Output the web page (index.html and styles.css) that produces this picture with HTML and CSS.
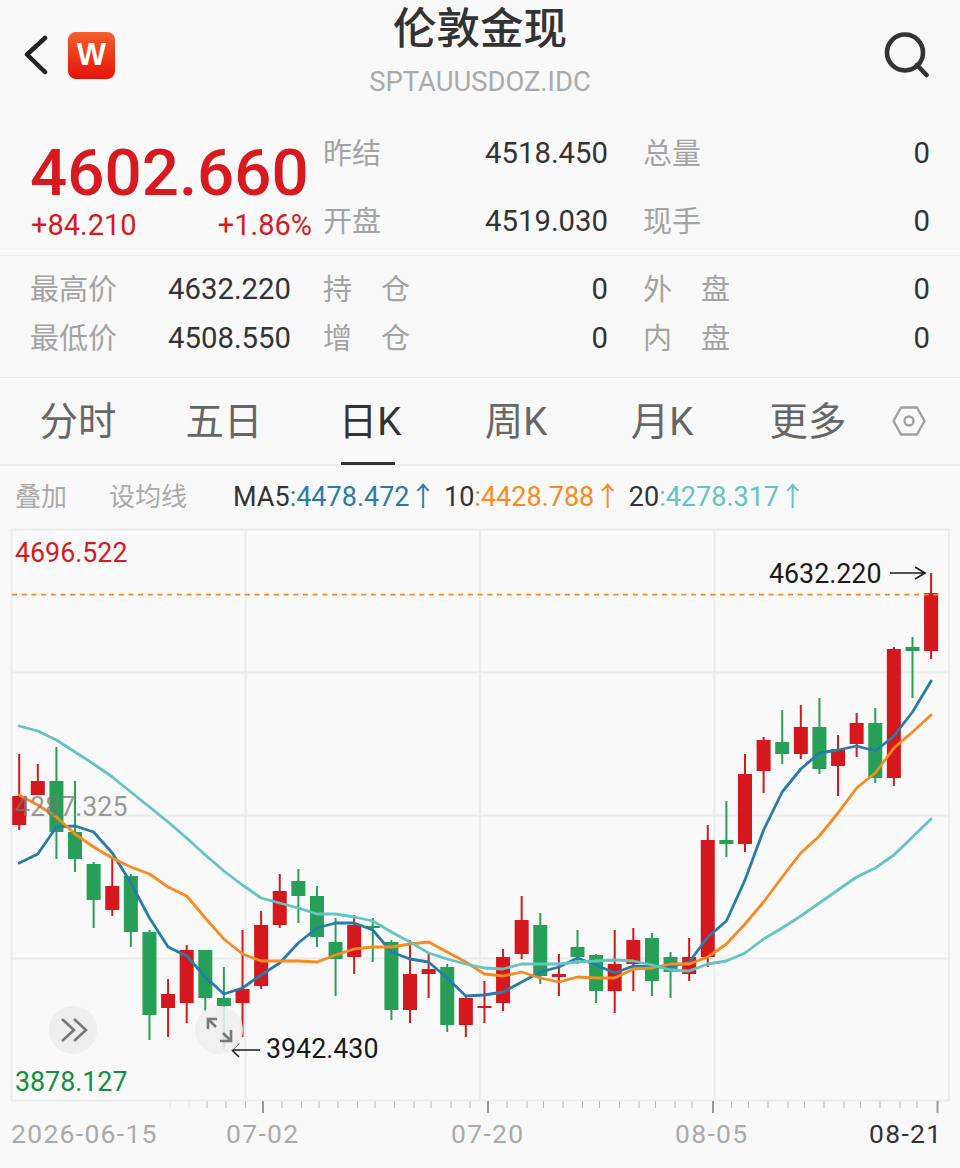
FILE: index.html
```html
<!DOCTYPE html>
<html lang="zh-CN">
<head>
    <meta charset="UTF-8">
    <meta name="viewport" content="width=device-width, initial-scale=1.0">
    <title>伦敦金现</title>
    <link rel="stylesheet" href="styles.css">
</head>
<body>
    <header class="topbar">
        <div class="topbar-left">
            <svg class="back-icon" width="24" height="40" viewBox="0 0 24 40">
                <path d="M21 3 L3 19.5 L21 37"/>
            </svg>
            <span class="logo">W</span>
        </div>
        <div class="title-box">
            <h1 class="title">伦敦金现</h1>
            <div class="code">SPTAUUSDOZ.IDC</div>
        </div>
        <svg class="search-icon" width="46" height="46" viewBox="0 0 46 46">
            <circle cx="21" cy="20.5" r="18"/>
            <path d="M33 33 L42.5 43"/>
        </svg>
    </header>

    <section class="quote">
        <div class="price-box">
            <div class="price">4602.660</div>
            <div class="change"><span>+84.210</span><span>+1.86%</span></div>
        </div>
        <div class="stat-grid stat-grid-top">
            <div class="stat"><span class="stat-label">昨结</span><span>4518.450</span></div>
            <div class="stat"><span class="stat-label">总量</span><span>0</span></div>
            <div class="stat"><span class="stat-label">开盘</span><span>4519.030</span></div>
            <div class="stat"><span class="stat-label">现手</span><span>0</span></div>
        </div>
    </section>

    <section class="extra">
        <div class="stat-grid-left">
            <div class="stat"><span class="stat-label">最高价</span><span>4632.220</span></div>
            <div class="stat"><span class="stat-label">最低价</span><span>4508.550</span></div>
        </div>
        <div class="stat-grid">
            <div class="stat"><span class="stat-label">持　仓</span><span>0</span></div>
            <div class="stat"><span class="stat-label">外　盘</span><span>0</span></div>
            <div class="stat"><span class="stat-label">增　仓</span><span>0</span></div>
            <div class="stat"><span class="stat-label">内　盘</span><span>0</span></div>
        </div>
    </section>

    <nav class="tabs">
        <div class="tab">分时</div>
        <div class="tab">五日</div>
        <div class="tab active">日K</div>
        <div class="tab">周K</div>
        <div class="tab">月K</div>
        <div class="tab">更多</div>
        <svg class="hex-icon" width="34" height="30" viewBox="0 0 34 30">
            <path d="M1.5 15 L9 1.5 H25 L32.5 15 L25 28.5 H9 Z"/>
            <circle cx="17" cy="15" r="4.5"/>
        </svg>
    </nav>

    <div class="ma-row">
        <span class="ma-action">叠加</span>
        <span class="ma-action">设均线</span>
        <span class="ma-values">
            MA5<span class="ma5">:4478.472↑</span>
            10<span class="ma10">:4428.788↑</span>
            20<span class="ma20">:4278.317↑</span>
        </span>
    </div>

    <!-- viewBox uses page coordinates so the readings below stay easy to check -->
    <svg class="chart" id="chart" width="960" height="640" viewBox="0 528 960 640">
        <g class="grid">
            <path d="M11.5 529.5 H949 V1100.5 H11.5 Z"/>
            <path d="M11.5 672.5 H949 M11.5 815.5 H949 M11.5 958.5 H949"/>
            <path d="M245.5 529 V1100 M480 529 V1100 M714.5 529 V1100"/>
        </g>
        <g id="ticks" class="ticks"></g>
        <g id="candles"></g>
        <path class="last-line" d="M12 594.7 H943"/>
        <g id="lines"></g>

        <text class="label label-high" x="15" y="562">4696.522</text>
        <text class="label label-mid" x="15" y="816">4287.325</text>
        <text class="label label-low" x="15" y="1091">3878.127</text>
        <text class="label label-mark" x="769" y="583">4632.220</text>
        <text class="label label-mark" x="266" y="1058">3942.430</text>
        <path class="mark-arrow" d="M890 573 H925 M915 567 L925 573 L915 579"/>
        <path class="mark-arrow" d="M260 1050 H232 M239 1043 L232 1050 L239 1057"/>

        <circle class="round-btn" cx="73" cy="1030" r="24"/>
        <path class="btn-icon" d="M62 1019 L74 1030 L62 1041 M74 1019 L86 1030 L74 1041"/>
        <circle class="round-btn round-btn-soft" cx="219" cy="1030" r="24"/>
        <path class="btn-icon" d="M217 1019 H208 V1029 M208 1019 L216 1027 M220 1041 H231 V1030 M231 1041 L223 1033"/>

        <text class="date" x="11" y="1143">2026-06-15</text>
        <text class="date" x="226" y="1143">07-02</text>
        <text class="date" x="451" y="1143">07-20</text>
        <text class="date" x="675" y="1143">08-05</text>
        <text class="date date-last" x="869" y="1143">08-21</text>
    </svg>

    <script src="chart.js"></script>
</body>
</html>
```

FILE: styles.css
```css
* {
    box-sizing: border-box;
}
body {
    margin: 0;
    width: 960px;
    height: 1168px;
    overflow: hidden;
    background: #f9f9f9;
    color: #333333;
    font-family: Roboto, "Noto Sans CJK SC", sans-serif;
}
.topbar {
    display: grid;
    grid-template-columns: 1fr auto 1fr;
    height: 125px;
    padding: 0 30px;
}
.topbar-left {
    display: flex;
    align-items: center;
    gap: 20px;
    height: 110px;
    margin-left: -6px;
}
.back-icon path {
    fill: none;
    stroke: #222222;
    stroke-width: 4.5;
    stroke-linecap: round;
    stroke-linejoin: round;
}
.logo {
    display: flex;
    align-items: center;
    justify-content: center;
    width: 47px;
    height: 47px;
    border-radius: 8px;
    background: linear-gradient(#f4602b, #e5130a);
    color: #ffffff;
    font-family: "Liberation Sans", sans-serif;
    font-size: 31px;
    font-weight: bold;
}
.title-box {
    text-align: center;
}
.title {
    margin: 0;
    padding-top: 3px;
    font-size: 43.5px;
    font-weight: 500;
    line-height: 54px;
}
.code {
    margin-top: 7px;
    color: #aaaaaa;
    font-size: 27.4px;
    line-height: 36px;
}
.search-icon {
    justify-self: end;
    margin-top: 32px;
}
.search-icon circle,
.search-icon path {
    fill: none;
    stroke: #333333;
    stroke-width: 4.6;
    stroke-linecap: round;
}
.quote {
    display: flex;
    height: 131px;
    padding-left: 30px;
    border-bottom: 1px solid #eeeeee;
}
.price-box {
    width: 293px;
    color: #d71920;
}
.price {
    font-size: 65.5px;
    font-weight: 500;
    line-height: 72px;
    margin-top: 12px;
}
.change {
    display: flex;
    justify-content: space-between;
    margin-right: 11px;
    font-size: 29px;
    line-height: 34px;
    margin-top: -1px;
    margin-left: 1px;
}
.stat-grid {
    display: grid;
    grid-template-columns: 285px 287px;
    column-gap: 35px;
    align-content: start;
}
.stat-grid-top {
    grid-auto-rows: 68px;
    padding-top: 11px;
}
.stat {
    display: flex;
    justify-content: space-between;
    font-size: 29.3px;
    line-height: 34px;
}
.stat-label {
    margin-top: 1px;
    color: #a3a3a3;
    font-size: 29px;
}
.extra {
    display: flex;
    height: 122px;
    padding: 16px 0 0 30px;
    border-bottom: 1px solid #eeeeee;
}
.extra .stat-grid {
    grid-auto-rows: 49px;
}
.stat-grid-left {
    display: grid;
    grid-auto-rows: 49px;
    align-content: start;
    width: 261px;
    margin-right: 32px;
}
.tabs {
    display: flex;
    align-items: center;
    height: 88px;
    padding-left: 5px;
    border-bottom: 2px solid #eeeeee;
}
.tab {
    width: 146px;
    color: #666666;
    font-size: 38.4px;
    text-align: center;
    position: relative;
    line-height: 88px;
    padding-top: 2px;
}
.tab.active {
    color: #333333;
}
.tab.active::after {
    content: "";
    position: absolute;
    left: 44px;
    bottom: 1px;
    width: 54px;
    height: 3px;
    background: #333333;
}
.hex-icon {
    margin-left: 11px;
}
.hex-icon path,
.hex-icon circle {
    fill: none;
    stroke: #a0a0a0;
    stroke-width: 2.4;
    stroke-linejoin: round;
}
.ma-row {
    display: flex;
    align-items: center;
    height: 62px;
    padding: 0 0 6px 15px;
}
.ma-action {
    margin-right: 42px;
    color: #aaaaaa;
    font-size: 26px;
}
.ma-action + .ma-action {
    margin-right: 46px;
}
.ma-values {
    font-size: 27px;
    color: #333333;
    white-space: nowrap;
    word-spacing: 0.8px;
}
.ma5 {
    color: #2a7ca8;
}
.ma10 {
    color: #f98a1d;
}
.ma20 {
    color: #63c4c2;
}
.chart {
    display: block;
}
.grid path {
    fill: none;
    stroke: #ececec;
    stroke-width: 2;
}
.ticks path {
    stroke: #b5b5b5;
    stroke-width: 1;
}
.ticks .tick-major {
    stroke: #999999;
    stroke-width: 2;
}
.ticks .tick-faint {
    stroke: #e6e6e6;
}
.candle-up {
    fill: #d4181d;
}
.candle-down {
    fill: #289f58;
}
.last-line {
    stroke: #f98a1d;
    stroke-width: 1.8;
    stroke-dasharray: 5 4.7;
}
.ma-line {
    fill: none;
    stroke-width: 2.8;
    stroke-linejoin: round;
    stroke-linecap: round;
}
.line-ma5 {
    stroke: #2a7ca8;
}
.line-ma10 {
    stroke: #f98a1d;
}
.line-ma20 {
    stroke: #63c4c2;
}
.label {
    font-size: 26.8px;
}
.label-high {
    fill: #d7191f;
}
.label-mid {
    fill: rgba(120, 120, 120, 0.75);
}
.label-low {
    fill: #0f8f40;
}
.label-mark {
    fill: #1a1a1a;
}
.mark-arrow {
    fill: none;
    stroke: #1a1a1a;
    stroke-width: 1.6;
}
.round-btn {
    fill: #eeeeee;
}
.round-btn-soft {
    fill-opacity: 0.88;
}
.btn-icon {
    fill: none;
    stroke: #777777;
    stroke-width: 2.6;
}
.date {
    fill: #aaaaaa;
    font-size: 26.5px;
    letter-spacing: 1.3px;
}
.date-last {
    fill: #333333;
}
```

FILE: chart.js
```js
// Daily candles: [wick top, body top, body bottom, wick bottom, up?]
const candles = [
    [754, 796, 825, 830, 1], [764, 781, 795, 795, 1], [747, 781, 832, 859, 0], [781, 832, 859, 872, 0],
    [862, 864, 900, 928, 0], [858, 886, 910, 916, 1], [874, 876, 932, 947, 0], [930, 932, 1015, 1040, 0],
    [979, 994, 1008, 1037, 1], [945, 950, 1003, 1023, 1], [950, 950, 998, 1011, 0], [967, 998, 1006, 1049, 0],
    [930, 989, 1003, 1037, 1], [911, 925, 986, 989, 1], [874, 891, 925, 928, 1], [869, 881, 896, 923, 0],
    [886, 896, 937, 947, 0], [918, 942, 959, 996, 0], [915, 925, 957, 974, 1], [918, 926, 928, 962, 0],
    [940, 942, 1010, 1020, 0], [940, 974, 1010, 1023, 1], [954, 969, 974, 998, 1], [964, 967, 1025, 1032, 0],
    [995, 998, 1025, 1037, 1], [981, 1006, 1008, 1023, 1], [949, 957, 1003, 1011, 1], [896, 920, 954, 959, 1],
    [913, 925, 976, 984, 0], [954, 974, 977, 996, 1], [930, 947, 957, 964, 0], [954, 955, 991, 1003, 0],
    [930, 964, 991, 1013, 1], [928, 940, 964, 991, 1], [933, 938, 981, 996, 0], [952, 957, 972, 998, 0],
    [938, 957, 974, 981, 1], [825, 840, 957, 967, 1], [801, 840, 844, 857, 0], [754, 774, 844, 852, 1],
    [737, 740, 771, 793, 1], [710, 742, 754, 764, 0], [705, 727, 754, 759, 1], [698, 727, 769, 774, 0],
    [735, 749, 766, 796, 1], [713, 723, 744, 757, 1], [708, 723, 778, 783, 0], [647, 649, 778, 786, 1],
    [637, 647, 651, 698, 0], [573, 593, 651, 659, 1]
];

const ma5 = [863, 854, 827, 826, 832, 853, 883, 918, 947, 956, 977, 994, 988, 975, 963, 943, 928, 923, 923, 930, 952, 959, 962, 978, 996, 995, 992, 982, 972, 967, 958, 965, 973, 966, 967, 967, 962, 937, 921, 880, 830, 792, 769, 753, 750, 746, 751, 736, 712, 681];
const ma10 = [795, 805, 817, 834, 847, 858, 867, 874, 887, 896, 918, 939, 954, 961, 961, 961, 962, 955, 949, 947, 947, 944, 942, 952, 962, 974, 976, 972, 978, 982, 977, 978, 978, 969, 968, 964, 964, 957, 944, 924, 902, 877, 853, 836, 813, 788, 773, 748, 732, 715];
const ma20 = [726, 731, 740, 752, 764, 777, 792, 807, 822, 838, 855, 871, 885, 898, 903, 908, 914, 914, 917, 921, 932, 942, 953, 959, 964, 968, 969, 964, 964, 964, 962, 961, 960, 961, 965, 970, 971, 964, 961, 953, 939, 928, 916, 903, 890, 877, 868, 855, 837, 819];

const minorTicks = [207, 226, 245.5, 282, 301.5, 319, 338, 357.5, 375, 394.5, 414, 431, 451, 470, 507, 527, 543.5, 563, 582.5, 599.5, 619.5, 639, 655.5, 675, 692, 731.5, 748.5, 768, 788, 804.5, 824, 844, 860.5, 880, 900, 917];
const fadedTicks = [170, 189];
const majorTicks = [263, 488, 713, 937.5];

const SVG_NS = "http://www.w3.org/2000/svg";
const candleGroup = document.getElementById("candles");
const lineGroup = document.getElementById("lines");
const tickGroup = document.getElementById("ticks");

function candleX(i) {
    return 19.2 + i * 18.61;
}

function addRect(cls, x, y, w, h) {
    const rect = document.createElementNS(SVG_NS, "rect");
    rect.setAttribute("class", cls);
    rect.setAttribute("x", x);
    rect.setAttribute("y", y);
    rect.setAttribute("width", w);
    rect.setAttribute("height", h);
    candleGroup.appendChild(rect);
}

candles.forEach((c, i) => {
    const cls = c[4] ? "candle-up" : "candle-down";
    const x = candleX(i);
    addRect(cls, x - 1, c[0], 2, c[3] - c[0]);
    addRect(cls, x - 7, c[1], 14, c[2] - c[1]);
});

// Moving averages go on top of the candles
[["line-ma5", ma5], ["line-ma10", ma10], ["line-ma20", ma20]].forEach(([cls, values]) => {
    const line = document.createElementNS(SVG_NS, "polyline");
    line.setAttribute("class", "ma-line " + cls);
    line.setAttribute("points", values.map((y, i) => candleX(i).toFixed(1) + "," + y).join(" "));
    lineGroup.appendChild(line);
});

function addTick(x, bottom, cls) {
    const tick = document.createElementNS(SVG_NS, "path");
    tick.setAttribute("d", `M${x} 1101 V${bottom}`);
    if (cls) tick.setAttribute("class", cls);
    tickGroup.appendChild(tick);
}

minorTicks.forEach(x => addTick(x, 1108));
fadedTicks.forEach(x => addTick(x, 1108, "tick-faint"));
majorTicks.forEach(x => addTick(x, 1113, "tick-major"));
```
